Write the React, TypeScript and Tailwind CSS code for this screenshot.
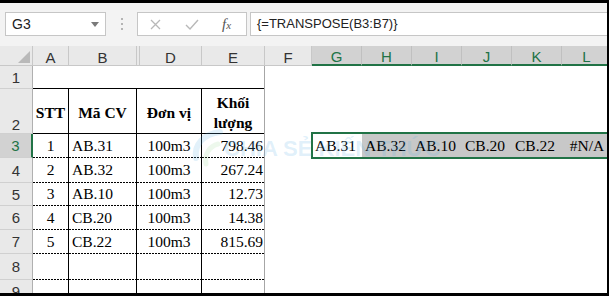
import React from "react";
import clsx from "clsx";

type RowDef = {
  n: number;
  h: string;
  kind: "blank" | "head" | "data" | "empty";
  data?: [string, string, string, string];
  line: "solid" | "dash" | "none";
};

const rows: RowDef[] = [
  { n: 1, h: "h-[23px]", kind: "blank", line: "solid" },
  { n: 2, h: "h-[45px]", kind: "head", line: "solid" },
  { n: 3, h: "h-[24px]", kind: "data", data: ["1", "AB.31", "100m3", "798.46"], line: "dash" },
  { n: 4, h: "h-[25px]", kind: "data", data: ["2", "AB.32", "100m3", "267.24"], line: "dash" },
  { n: 5, h: "h-[23px]", kind: "data", data: ["3", "AB.10", "100m3", "12.73"], line: "dash" },
  { n: 6, h: "h-[24px]", kind: "data", data: ["4", "CB.20", "100m3", "14.38"], line: "dash" },
  { n: 7, h: "h-[24px]", kind: "data", data: ["5", "CB.22", "100m3", "815.69"], line: "dash" },
  { n: 8, h: "h-[26px]", kind: "empty", line: "dash" },
  { n: 9, h: "h-[24px]", kind: "empty", line: "none" },
];

// G3:L3 holds the TRANSPOSE result
const transposed = ["AB.31", "AB.32", "AB.10", "CB.20", "CB.22", "#N/A"];

const lineCls = {
  solid: "h-px shrink-0 bg-black",
  dash: "h-px shrink-0 bg-[repeating-linear-gradient(90deg,#000_0px,#000_2px,transparent_2px,transparent_3px)]",
  none: "h-px shrink-0",
};

const serif = "font-['Liberation_Serif','Times_New_Roman',serif] text-[15.5px] text-black";

function TCell({
  w,
  edge,
  line,
  className,
  children,
}: {
  w: string;
  edge: "black" | "gray" | "none";
  line: RowDef["line"];
  className?: string;
  children?: React.ReactNode;
}) {
  return (
    <div
      className={clsx(
        "shrink-0 flex flex-col",
        w,
        edge === "black" && "border-r border-black",
        edge === "gray" && "border-r border-[#a6a6a6]"
      )}
    >
      <div className={clsx("flex-1 min-h-0 flex", className)}>{children}</div>
      <div className={lineCls[line]} />
    </div>
  );
}

function FormulaBar() {
  return (
    <div className="h-[43px] shrink-0 bg-[#f3f3f3] flex items-start pt-[9px] pl-[5px]">
      <div className="w-[101px] h-[24px] shrink-0 bg-white border border-[#c6c6c6] flex items-center justify-between pl-[6px] pr-[6px] text-[14px] text-[#222]">
        <span>G3</span>
        <svg width="8" height="5" viewBox="0 0 8 5">
          <path d="M0 0h8L4 5z" fill="#7a7a7a" />
        </svg>
      </div>
      <div className="ml-[15px] w-[2px] h-[24px] shrink-0 flex flex-col justify-center gap-[3px]">
        <div className="w-[2px] h-[2px] bg-[#b4b4b4]" />
        <div className="w-[2px] h-[2px] bg-[#b4b4b4]" />
        <div className="w-[2px] h-[2px] bg-[#b4b4b4]" />
      </div>
      <div className="ml-[14px] w-[110px] h-[24px] shrink-0 bg-white border border-[#c6c6c6] flex items-center pl-[12px]">
        <svg width="11" height="11" viewBox="0 0 11 11">
          <path d="M1 1l9 9M10 1l-9 9" stroke="#b8b8b8" strokeWidth="1.3" />
        </svg>
        <svg className="ml-[24px]" width="14" height="11" viewBox="0 0 14 11">
          <path d="M1 6l4 4 8-9" stroke="#b8b8b8" strokeWidth="1.4" fill="none" />
        </svg>
        <span className="ml-[23px] font-['Liberation_Serif',serif] italic text-[15px] leading-none text-[#555]">
          f<span className="text-[11px]">x</span>
        </span>
      </div>
      <div className="ml-[3px] flex-1 h-[24px] bg-white border border-r-0 border-[#c6c6c6] flex items-center pl-[6px] text-[13px] text-[#222]">
        {"{=TRANSPOSE(B3:B7)}"}
      </div>
    </div>
  );
}

function ColumnHeaders() {
  const hdr = "shrink-0 flex items-end justify-center leading-none text-[15px] border-r border-b border-[#c8c8c8] text-[#333]";
  const sel = "shrink-0 flex items-end justify-center leading-none text-[15px] border-r border-[#c0c0c0] border-b-2 border-b-[#217346] bg-[#d2d2d2] text-[#217346]";
  return (
    <div className="h-[20px] shrink-0 flex bg-[#e9e9e9]">
      <div className="w-[33px] shrink-0 border-r border-b border-[#c8c8c8] flex items-end justify-end pr-[2px] pb-[2px]">
        <svg width="12" height="12" viewBox="0 0 12 12">
          <path d="M12 0v12H0z" fill="#b9b9b9" />
        </svg>
      </div>
      <div className={clsx(hdr, "w-[36px]")}>A</div>
      <div className={clsx(hdr, "w-[68px]")}>B</div>
      <div className="w-[3px] shrink-0 border-r border-b border-[#c8c8c8]" />
      <div className={clsx(hdr, "w-[62px]")}>D</div>
      <div className={clsx(hdr, "w-[63px]")}>E</div>
      <div className={clsx(hdr, "w-[47px]")}>F</div>
      {["G", "H", "I", "J", "K", "L"].map((c) => (
        <div key={c} className={clsx(sel, "w-[50px]")}>
          {c}
        </div>
      ))}
    </div>
  );
}

function RowHeader({ r }: { r: RowDef }) {
  const on = r.n === 3;
  return (
    <div
      className={clsx(
        "w-[33px] shrink-0 flex justify-center leading-none text-[15px] border-b border-[#d0d0d0]",
        r.kind === "head" ? "items-end pb-[1px]" : "items-center",
        on
          ? "bg-[#d2d2d2] text-[#217346] border-r-2 border-r-[#217346]"
          : "bg-[#e9e9e9] text-[#333] border-r border-r-[#b0b0b0]"
      )}
    >
      {r.n}
    </div>
  );
}

function SheetRow({ r }: { r: RowDef }) {
  const inTable = r.kind !== "blank";
  const v = inTable ? "black" : "none";
  const head = "items-center justify-center pt-[3px] font-bold leading-[20px] text-center";
  const cell = "items-center leading-none";
  const d = r.data;
  return (
    <div className={clsx("flex shrink-0", r.h)}>
      <RowHeader r={r} />
      <TCell w="w-[36px]" edge={v} line={r.line} className={clsx(serif, r.kind === "head" ? head : clsx(cell, "justify-center"))}>
        {r.kind === "head" ? "STT" : d?.[0]}
      </TCell>
      <TCell w="w-[68px]" edge={v} line={r.line} className={clsx(serif, r.kind === "head" ? head : clsx(cell, "pl-[3px]"))}>
        {r.kind === "head" ? "Mã CV" : d?.[1]}
      </TCell>
      <TCell w="w-[65px]" edge={v} line={r.line} className={clsx(serif, r.kind === "head" ? head : clsx(cell, "justify-center"))}>
        {r.kind === "head" ? "Đơn vị" : d?.[2]}
      </TCell>
      <TCell w="w-[63px]" edge="gray" line={r.line} className={clsx(serif, r.kind === "head" ? head : clsx(cell, "justify-end pr-[1px]"))}>
        {r.kind === "head" ? (
          <span>
            Khối
            <br />
            lượng
          </span>
        ) : (
          d?.[3]
        )}
      </TCell>
      <div className="w-[47px] shrink-0" />
      {transposed.map((t, i) => (
        <div
          key={i}
          className={clsx(
            "w-[50px] shrink-0 flex items-center leading-none",
            serif,
            r.n === 3 && i > 0 && "bg-[#c8c8c8]",
            i === 5 ? "justify-center" : "pl-[3px]"
          )}
        >
          {r.n === 3 ? t : null}
        </div>
      ))}
    </div>
  );
}

export default function App() {
  return (
    <div className="w-[609px] h-[296px] overflow-hidden bg-white border-t-[3px] border-r-2 border-b-[3px] border-black flex flex-col font-['Liberation_Sans',Arial,sans-serif]">
      <FormulaBar />
      <ColumnHeaders />
      <div className="relative flex-1 min-h-0 flex flex-col">
        {rows.map((r) => (
          <SheetRow key={r.n} r={r} />
        ))}
        {/* active selection G3:L3 */}
        <div className="absolute top-[66px] left-[311px] w-[310px] h-[27px] border-2 border-[#217346] pointer-events-none" />
        {/* faint site watermark */}
        <svg className="absolute top-[62px] left-[190px] pointer-events-none" width="34" height="40" viewBox="0 0 34 40">
          <path d="M30 4C14 6 4 16 6 30" stroke="#5fb3e6" strokeOpacity="0.18" strokeWidth="6" fill="none" strokeLinecap="round" />
          <path d="M28 16C20 18 14 26 16 36" stroke="#8cd18a" strokeOpacity="0.16" strokeWidth="5" fill="none" strokeLinecap="round" />
        </svg>
        <div className="absolute top-[72px] left-[224px] whitespace-nowrap leading-none text-[22px] font-bold text-[#5fb3e6]/20 pointer-events-none">
          CHIA SẺ KIẾN THỨC
        </div>
      </div>
    </div>
  );
}
